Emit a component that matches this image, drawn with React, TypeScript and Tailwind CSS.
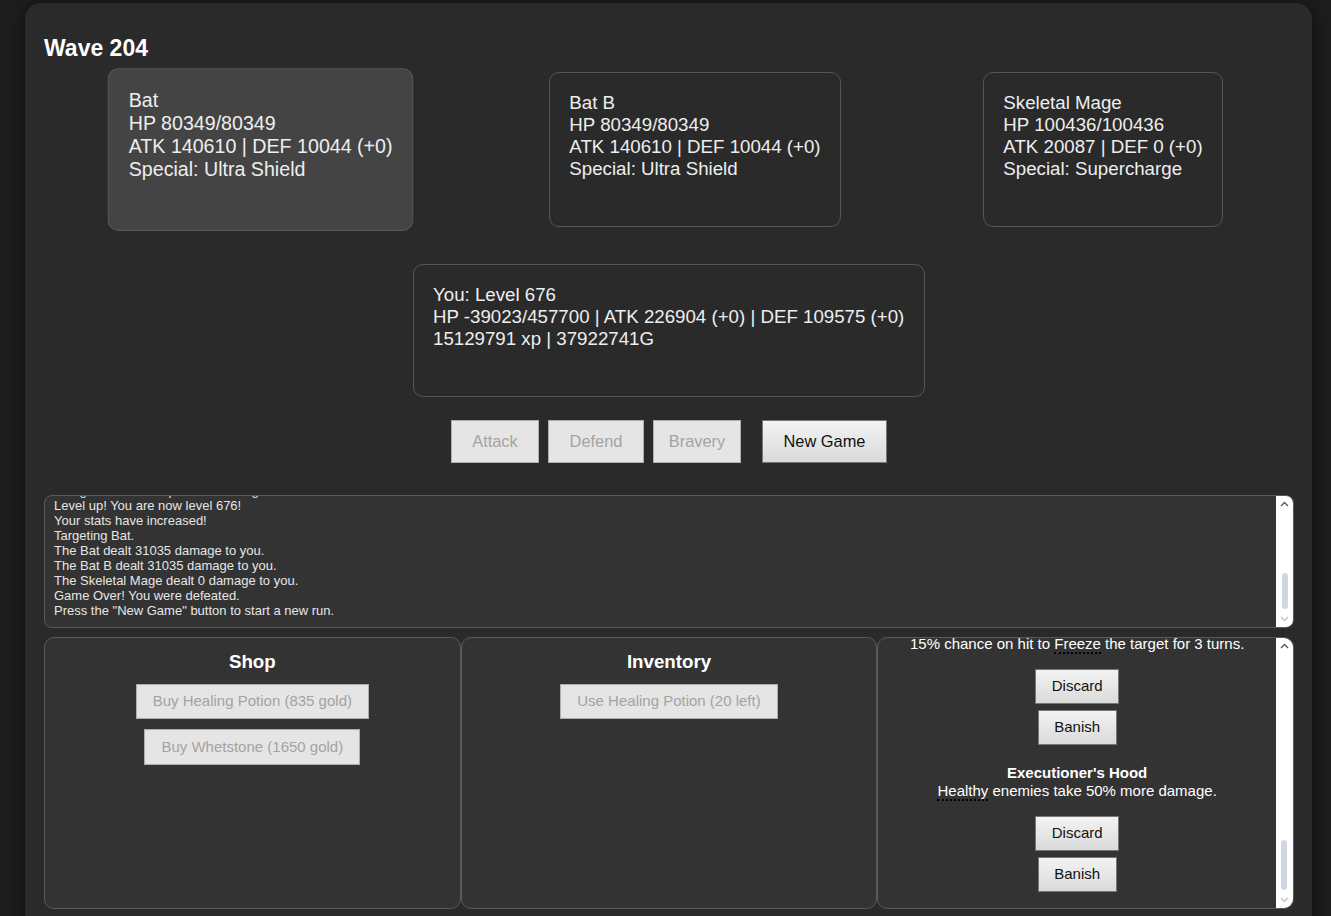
import React from "react";

const enemies = [
  { name: "Bat", hp: "80349/80349", atk: "140610", def: "10044 (+0)", special: "Ultra Shield", selected: true },
  { name: "Bat B", hp: "80349/80349", atk: "140610", def: "10044 (+0)", special: "Ultra Shield", selected: false },
  { name: "Skeletal Mage", hp: "100436/100436", atk: "20087", def: "0 (+0)", special: "Supercharge", selected: false },
];

const logLines = [
  "You gained 73512 xp and 184293 gold!",
  "Level up! You are now level 676!",
  "Your stats have increased!",
  "Targeting Bat.",
  "The Bat dealt 31035 damage to you.",
  "The Bat B dealt 31035 damage to you.",
  "The Skeletal Mage dealt 0 damage to you.",
  "Game Over! You were defeated.",
  'Press the "New Game" button to start a new run.',
];

function Chevron({ up, light }: { up?: boolean; light?: boolean }) {
  return (
    <svg width="9" height="6" viewBox="0 0 9 6" className={up ? "" : "rotate-180"}>
      <path d="M1 5 L4.5 1.5 L8 5" fill="none" stroke={light ? "#c4c4c4" : "#5a5a5a"} strokeWidth="1.4" />
    </svg>
  );
}

// fake classic scrollbar, scrolled to the bottom
function ScrollBar({ thumb }: { thumb: number }) {
  return (
    <div className="w-[17px] shrink-0 bg-white flex flex-col items-center">
      <div className="h-[16px] flex items-center justify-center">
        <Chevron up />
      </div>
      <div className="flex-1 flex flex-col justify-end pb-[2px]">
        <div className="w-[6px] rounded-full bg-[#cfd8e2]" style={{ height: thumb }} />
      </div>
      <div className="h-[16px] flex items-center justify-center">
        <Chevron light />
      </div>
    </div>
  );
}

function GameButton({ children, disabled, className = "" }: { children: React.ReactNode; disabled?: boolean; className?: string }) {
  return (
    <button
      disabled={disabled}
      className={
        "border " +
        (disabled
          ? "bg-[#e5e5e5] border-[#adadad] text-[#a3a3a3] "
          : "bg-gradient-to-b from-[#f3f3f3] to-[#dadada] border-[#767676] text-[#111] ") +
        className
      }
    >
      {children}
    </button>
  );
}

function Item({ title, children }: { title: string; children: React.ReactNode }) {
  return (
    <div className="flex flex-col items-center text-center">
      <div className="font-bold leading-[18px]">{title}</div>
      <div className="leading-[18px]">{children}</div>
      <div className="mt-[16px] flex flex-col items-center gap-[6px]">
        <GameButton className="h-[35px] w-[84px] text-[15px]">Discard</GameButton>
        <GameButton className="h-[35px] w-[79px] text-[15px]">Banish</GameButton>
      </div>
    </div>
  );
}

export default function App() {
  return (
    <div className="h-screen overflow-hidden bg-[#1e1e1e] font-['Liberation_Sans',Arial,sans-serif] text-[#eeeeee]">
      <div className="ml-[25px] mt-[3px] w-[1287px] min-h-[940px] rounded-t-[16px] bg-[#2a2a2a] shadow-[0_0_22px_rgba(0,0,0,0.55)] pl-[19px] pr-[18px] pt-[31px]">
        {/* wave */}
        <h2 className="text-[23px] leading-[28px] font-bold text-white">Wave 204</h2>

        {/* enemies */}
        <div className="mt-[10px] flex justify-around">
          {enemies.map((e) => (
            <div
              key={e.name}
              className={
                "h-[155px] rounded-[10px] border border-[#565656] px-[19px] pt-[19px] text-[18.7px] leading-[22px] " +
                (e.selected ? "bg-[#444444] scale-105" : "bg-[#2a2a2a]")
              }
            >
              <div>{e.name}</div>
              <div>HP {e.hp}</div>
              <div>
                ATK {e.atk} | DEF {e.def}
              </div>
              <div>Special: {e.special}</div>
            </div>
          ))}
        </div>

        {/* player */}
        <div className="mt-[37px] flex justify-center">
          <div className="w-[512px] h-[133px] rounded-[10px] border border-[#565656] px-[19px] pt-[19px] text-[18.7px] leading-[22px]">
            <div>You: Level 676</div>
            <div>HP -39023/457700 | ATK 226904 (+0) | DEF 109575 (+0)</div>
            <div>15129791 xp | 37922741G</div>
          </div>
        </div>

        {/* actions */}
        <div className="mt-[23px] flex justify-center gap-[9px] text-[16.4px]">
          <GameButton disabled className="h-[43px] w-[88px]">Attack</GameButton>
          <GameButton disabled className="h-[43px] w-[96px]">Defend</GameButton>
          <GameButton disabled className="h-[43px] w-[88px]">Bravery</GameButton>
          <GameButton className="h-[43px] w-[125px] ml-3">New Game</GameButton>
        </div>

        {/* log */}
        <div className="mt-[32px] h-[133px] rounded-[8px] border border-[#5a5a5a] bg-[#333333] flex overflow-hidden">
          <div className="flex-1 flex flex-col justify-end overflow-hidden pl-[9px] pb-[9px] text-[13px] leading-[15px] text-[#e6e6e6]">
            {logLines.map((l, i) => (
              <div key={i} className="whitespace-nowrap">{l}</div>
            ))}
          </div>
          <ScrollBar thumb={36} />
        </div>

        {/* bottom panels */}
        <div className="mt-[9px] grid grid-cols-3 h-[272px]">
          <div className="rounded-[10px] border border-[#5a5a5a] bg-[#333333] pt-[13px] flex flex-col items-center">
            <h3 className="text-[18.72px] leading-[22px] font-bold text-white">Shop</h3>
            <div className="mt-[11px] flex flex-col items-center gap-[10px]">
              <GameButton disabled className="h-[35px] px-4 text-[15px]">Buy Healing Potion (835 gold)</GameButton>
              <GameButton disabled className="h-[36px] px-4 text-[15px]">Buy Whetstone (1650 gold)</GameButton>
            </div>
          </div>
          <div className="rounded-[10px] border border-[#5a5a5a] bg-[#333333] pt-[13px] flex flex-col items-center">
            <h3 className="text-[18.72px] leading-[22px] font-bold text-white">Inventory</h3>
            <div className="mt-[11px]">
              <GameButton disabled className="h-[35px] px-4 text-[15px]">Use Healing Potion (20 left)</GameButton>
            </div>
          </div>
          <div className="rounded-[10px] border border-[#5a5a5a] bg-[#333333] flex overflow-hidden">
            <div className="flex-1 flex flex-col justify-end gap-[19px] overflow-hidden pb-[16px] text-[15px] text-white">
              <Item title="Frost Brand">
                15% chance on hit to <span className="border-b-2 border-dotted border-black">Freeze</span> the target for 3 turns.
              </Item>
              <Item title="Executioner's Hood">
                <span className="border-b-2 border-dotted border-black">Healthy</span> enemies take 50% more damage.
              </Item>
            </div>
            <ScrollBar thumb={50} />
          </div>
        </div>
      </div>
    </div>
  );
}
